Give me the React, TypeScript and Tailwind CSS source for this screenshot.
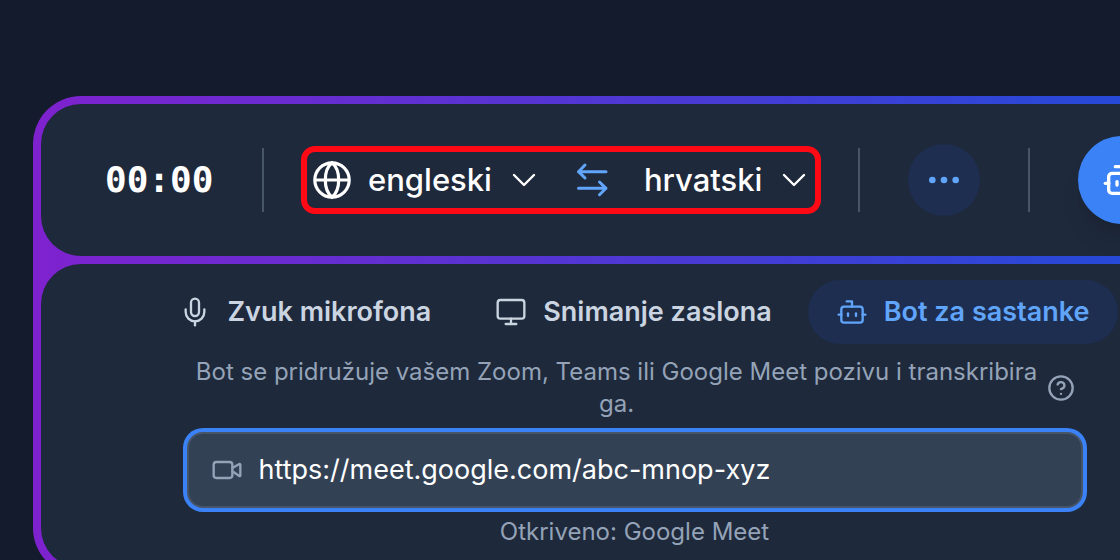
import { useState } from "react";
import type { ReactNode } from "react";
import { Bot, CircleQuestionMark, Ellipsis, Mic, Monitor, Video } from "lucide-react";

function GlobeIcon() {
  return (
    <svg viewBox="0 0 40 40" className="size-10 shrink-0" fill="none" stroke="currentColor" strokeWidth="3.2" aria-hidden="true">
      <circle cx="20" cy="20" r="17.2" />
      <path d="M20 2.8C15.500 6.500 13.300 13 13.300 20S15.500 33.500 20 37.200C24.500 33.500 26.700 27 26.700 20S24.500 6.500 20 2.800Z" />
      <path d="M2.800 20H37.200" />
    </svg>
  );
}

function ChevronIcon() {
  return (
    <svg viewBox="0 0 24 24" className="size-8 shrink-0" fill="none" stroke="currentColor" strokeWidth="1.8" strokeLinecap="round" strokeLinejoin="round" aria-hidden="true">
      <path d="m19.500 8.250-7.500 7.500-7.500-7.500" />
    </svg>
  );
}

function SwapIcon() {
  return (
    <svg viewBox="0 0 40 40" className="size-10" fill="none" stroke="currentColor" strokeWidth="3" strokeLinecap="round" strokeLinejoin="round" aria-hidden="true">
      <path d="M34 11.700H6.500M13 5 6.500 11.700 13 18M6.500 28.300H34M27.500 22 34 28.300 27.500 34.700" />
    </svg>
  );
}

function Divider() {
  return <div className="h-16 w-0.5 shrink-0 bg-[#475569]" />;
}

function LanguageButton({ children, icon }: { children: string; icon?: ReactNode }) {
  return (
    <button type="button" className="flex shrink-0 items-center gap-4 text-[31px] leading-10 font-medium text-white">
      {icon}
      <span>{children}</span>
      <ChevronIcon />
    </button>
  );
}

const tabs = [
  { id: "mic", label: "Zvuk mikrofona", Icon: Mic },
  { id: "screen", label: "Snimanje zaslona", Icon: Monitor },
  { id: "bot", label: "Bot za sastanke", Icon: Bot },
];

export default function App() {
  const [active, setActive] = useState("bot");
  const [url, setUrl] = useState("https://meet.google.com/abc-mnop-xyz");

  return (
    <main className="min-h-screen overflow-hidden bg-[#131b2c] pt-24 pl-[33px] font-['Inter','Liberation_Sans',sans-serif]">
      <div className="-mr-[116px] flex flex-col gap-2 rounded-[48px] bg-linear-to-r/srgb from-[#7e22ce] to-[#1d4ed8] p-2">
        <header className="flex items-center rounded-[40px] bg-[#1e293b] px-16 py-8">
          <time className="w-[109px] shrink-0 font-['DejaVu_Sans_Mono',monospace] text-[36px] leading-10 font-bold text-white">00:00</time>
          <div className="flex items-center pl-12">
            <Divider />
          </div>
          <div className="mx-[37px] flex shrink-0 items-center rounded-[14px] border-6 border-[#ff0a14] px-[5px] py-2">
            <LanguageButton icon={<GlobeIcon />}>engleski</LanguageButton>
            <button type="button" aria-label="Zamijeni jezike" className="mx-4 flex w-[72px] justify-center text-[#60a5fa]">
              <SwapIcon />
            </button>
            <LanguageButton>hrvatski</LanguageButton>
          </div>
          <div className="flex shrink-0 items-center gap-12">
            <Divider />
            <button type="button" aria-label="Više" className="flex size-[72px] items-center justify-center rounded-full bg-[#1d2e51] text-[#60a5fa]">
              <Ellipsis size={40} />
            </button>
            <Divider />
            <button type="button" aria-label="Pokreni bota" className="flex size-[88px] items-center justify-center rounded-full bg-[#3b82f6] text-white shadow-xl">
              <Bot size={40} />
            </button>
          </div>
        </header>

        <section className="flex flex-col items-center gap-3 rounded-[40px] bg-[#1e293b] pt-4 pb-5">
          <div className="flex gap-2">
            {tabs.map(({ id, label, Icon }) => (
              <button
                key={id}
                type="button"
                aria-pressed={active === id}
                onClick={() => setActive(id)}
                className={
                  active === id
                    ? "flex h-16 shrink-0 items-center gap-4 rounded-full bg-[#1d2e51] px-7 text-[27px] leading-10 font-semibold whitespace-nowrap text-[#60a5fa]"
                    : "flex h-16 shrink-0 items-center gap-4 rounded-full px-7 text-[27px] leading-10 font-semibold whitespace-nowrap text-[#cbd5e1]"
                }
              >
                <Icon size={32} strokeWidth={1.75} />
                {label}
              </button>
            ))}
          </div>
          <div className="flex w-full max-w-[896px] items-center justify-center gap-2 px-2 text-[#94a3b8]">
            <p className="max-w-[848px] text-center text-2xl leading-8">
              Bot se pridružuje vašem Zoom, Teams ili Google Meet pozivu i transkribira ga.
            </p>
            <button type="button" aria-label="Pomoć" className="shrink-0">
              <CircleQuestionMark size={28} />
            </button>
          </div>
          <div className="flex w-full flex-col items-center gap-2">
            <label className="flex h-[76px] w-full max-w-[896px] items-center gap-4 rounded-2xl border-2 border-[#475569] bg-[#334155] px-[22px] ring-4 ring-[#3b82f6]">
              <Video size={32} strokeWidth={1.75} className="shrink-0 text-[#94a3b8]" />
              <input
                type="text"
                aria-label="Poveznica sastanka"
                value={url}
                onChange={(e) => setUrl(e.target.value)}
                className="min-w-0 flex-1 bg-transparent text-[27px] leading-10 text-white outline-none"
              />
            </label>
            <p className="text-2xl leading-8 text-[#94a3b8]">Otkriveno: Google Meet</p>
          </div>
        </section>
      </div>
    </main>
  );
}
